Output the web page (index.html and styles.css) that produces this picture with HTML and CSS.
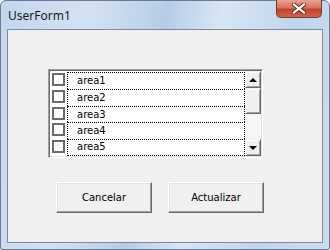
FILE: index.html
```html
<!DOCTYPE html>
<html>
<head>
<meta charset="utf-8">
<link rel="stylesheet" href="styles.css">
</head>
<body>
<div class="window">
  <div class="titlebar">
    <span class="title">UserForm1</span>
    <div class="close">
      <svg width="14" height="11" viewBox="0 0 14 11">
        <path d="M2 1.5 L12 9.5 M12 1.5 L2 9.5" stroke="#5a2a22" stroke-width="4" stroke-linecap="square" fill="none"/>
        <path d="M2 1.5 L12 9.5 M12 1.5 L2 9.5" stroke="#ffffff" stroke-width="2.2" stroke-linecap="square" fill="none"/>
      </svg>
    </div>
  </div>
  <div class="client">
    <div class="listbox">
      <div class="items">
        <div class="row"><span class="check"></span><span class="label">area1</span></div>
        <div class="row"><span class="check"></span><span class="label">area2</span></div>
        <div class="row"><span class="check"></span><span class="label">area3</span></div>
        <div class="row"><span class="check"></span><span class="label">area4</span></div>
        <div class="row last"><span class="check"></span><span class="label">area5</span></div>
      </div>
      <div class="scrollbar">
        <div class="sbtn"><span class="tri-up"></span></div>
        <div class="thumb"></div>
        <div class="track"></div>
        <div class="sbtn"><span class="tri-down"></span></div>
      </div>
    </div>
    <div class="buttons">
      <div class="btn">Cancelar</div>
      <div class="btn">Actualizar</div>
    </div>
  </div>
</div>
</body>
</html>
```

FILE: styles.css
```css
html, body {
  margin: 0;
  padding: 0;
  background: #ffffff;
}
.window {
  width: 330px;
  height: 250px;
  box-sizing: border-box;
  display: flex;
  flex-direction: column;
  background: linear-gradient(100deg, #c3d6ec 0%, #d3e2f2 25%, #b6cce6 45%, #d8e6f4 60%, #c1d5eb 80%, #cadcef 100%);
  border: 1px solid #6c7d92;
  border-radius: 6px 6px 2px 2px;
  font-family: "DejaVu Sans", sans-serif;
}
.titlebar {
  height: 28px;
  display: flex;
  justify-content: space-between;
  align-items: flex-start;
  padding-left: 7px;
  padding-right: 7px;
}
.title {
  font-family: "Noto Sans", "Open Sans", sans-serif;
  font-size: 12px;
  color: #1a1a1a;
  margin-top: 6px;
}
.close {
  width: 46px;
  height: 18px;
  margin-top: -1px;
  box-sizing: border-box;
  border: 1px solid #6e3a31;
  border-top: none;
  border-radius: 0 0 5px 5px;
  background: linear-gradient(to bottom, #e9a493 0%, #d8735c 45%, #c2412a 55%, #d0634a 100%);
  display: flex;
  align-items: center;
  justify-content: center;
}
.client {
  flex: 1;
  margin: 0 6px 6px 6px;
  border: 1px solid #7d8b9c;
  background: #f0f0f0;
  display: flex;
  flex-direction: column;
}
.listbox {
  margin-top: 39px;
  margin-left: 40px;
  width: 215px;
  height: 89px;
  box-sizing: border-box;
  border-top: 1px solid #a0a0a0;
  border-left: 1px solid #a0a0a0;
  border-right: 1px solid #ffffff;
  border-bottom: 1px solid #ffffff;
  display: flex;
  background: #ffffff;
  box-shadow: inset 1px 1px 0 #696969, inset -1px -1px 0 #e3e3e3;
  padding: 1px;
}
.items {
  flex: 1;
  display: flex;
  flex-direction: column;
  padding-top: 1px;
}
.row {
  display: flex;
  height: 17px;
  align-items: stretch;
}
.check {
  width: 13px;
  height: 13px;
  box-sizing: border-box;
  border: 2px solid #6b6b6b;
  margin: 1px 2px 0 2px;
  background: #ffffff;
}
.label {
  flex: 1;
  border-top: 1px dotted #000;
  border-left: 1px dotted #000;
  border-right: 1px dotted #000;
  font-size: 10px;
  color: #000;
  padding-left: 9px;
  line-height: 15px;
}
.row.last .label {
  border-bottom: 1px dotted #000;
  line-height: 14px;
}
.scrollbar {
  width: 16px;
  display: flex;
  flex-direction: column;
  background: #f4f4f4;
}
.sbtn, .thumb {
  box-sizing: border-box;
  background: #f0f0f0;
  border-top: 1px solid #f0f0f0;
  border-left: 1px solid #f0f0f0;
  border-right: 1px solid #696969;
  border-bottom: 1px solid #696969;
  box-shadow: inset 1px 1px 0 #ffffff, inset -1px -1px 0 #a0a0a0;
}
.sbtn {
  height: 17px;
  display: flex;
  align-items: center;
  justify-content: center;
}
.thumb {
  height: 26px;
}
.track {
  flex: 1;
  background: #f6f6f6;
}
.tri-up {
  width: 0;
  height: 0;
  border-left: 4px solid transparent;
  border-right: 4px solid transparent;
  border-bottom: 4px solid #000;
}
.tri-down {
  width: 0;
  height: 0;
  border-left: 4px solid transparent;
  border-right: 4px solid transparent;
  border-top: 4px solid #000;
}
.buttons {
  display: flex;
  gap: 16px;
  margin-top: 24px;
  margin-left: 48px;
}
.btn {
  width: 96px;
  height: 31px;
  box-sizing: border-box;
  background: #f0f0f0;
  border-top: 1px solid #ffffff;
  border-left: 1px solid #ffffff;
  border-right: 1px solid #696969;
  border-bottom: 1px solid #696969;
  box-shadow: inset -1px -1px 0 #a0a0a0, inset 1px 1px 0 #e3e3e3;
  display: flex;
  align-items: center;
  justify-content: center;
  font-size: 10px;
  color: #000;
}
```
